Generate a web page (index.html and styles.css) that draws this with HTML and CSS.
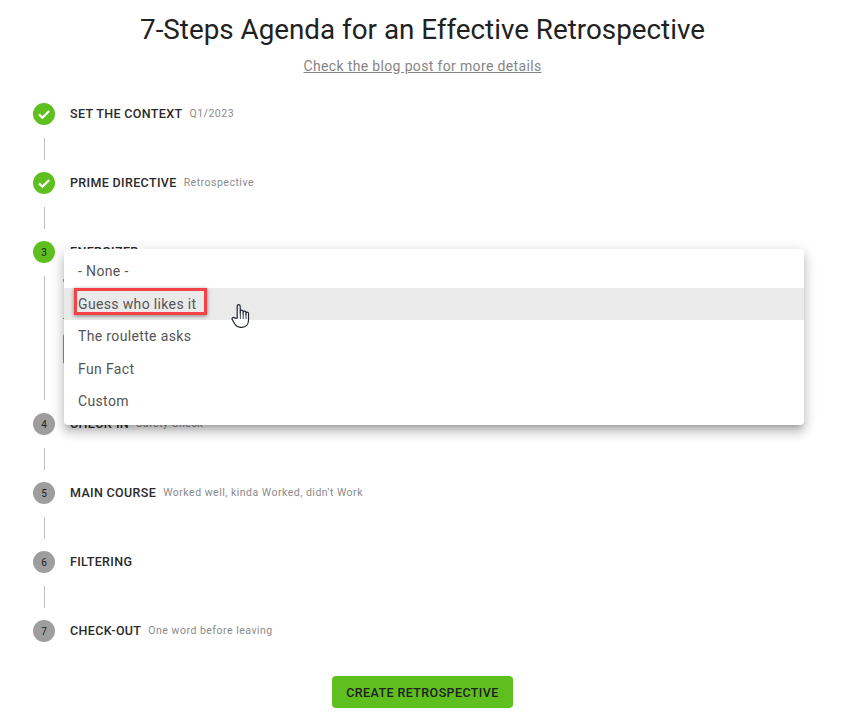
FILE: index.html
```html
<!DOCTYPE html>
<html lang="en">
<head>
  <meta charset="UTF-8">
  <meta name="viewport" content="width=device-width, initial-scale=1.0">
  <title>7-Steps Agenda</title>
  <link rel="stylesheet" href="styles.css">
</head>
<body>
  <header class="page-head">
    <h1>7-Steps Agenda for an Effective Retrospective</h1>
    <a class="blog-link" href="#">Check the blog post for more details</a>
  </header>

  <main class="stepper">
    <div class="step">
      <span class="step-icon done">
        <svg viewBox="0 0 22 22" width="22" height="22"><path d="M6 11.4l3.4 3.4L16.2 8" fill="none" stroke="#fff" stroke-width="2.2"/></svg>
      </span>
      <span class="step-title">SET THE CONTEXT</span>
      <span class="step-sub">Q1/2023</span>
    </div>
    <div class="connector"></div>

    <div class="step">
      <span class="step-icon done">
        <svg viewBox="0 0 22 22" width="22" height="22"><path d="M6 11.4l3.4 3.4L16.2 8" fill="none" stroke="#fff" stroke-width="2.2"/></svg>
      </span>
      <span class="step-title">PRIME DIRECTIVE</span>
      <span class="step-sub">Retrospective</span>
    </div>
    <div class="connector"></div>

    <div class="step">
      <span class="step-icon active">3</span>
      <span class="step-title">ENERGIZER</span>
    </div>
    <div class="connector connector-open">
      <div class="step-body">
        <div class="field-label"></div>
        <div class="field-line"></div>
        <div class="btn-next"></div>
      </div>
    </div>

    <div class="step">
      <span class="step-icon">4</span>
      <span class="step-title">CHECK-IN</span>
      <span class="step-sub">Safety Check</span>
    </div>
    <div class="connector"></div>

    <div class="step">
      <span class="step-icon">5</span>
      <span class="step-title">MAIN COURSE</span>
      <span class="step-sub">Worked well, kinda Worked, didn't Work</span>
    </div>
    <div class="connector"></div>

    <div class="step">
      <span class="step-icon">6</span>
      <span class="step-title">FILTERING</span>
    </div>
    <div class="connector"></div>

    <div class="step">
      <span class="step-icon">7</span>
      <span class="step-title">CHECK-OUT</span>
      <span class="step-sub">One word before leaving</span>
    </div>

    <ul class="menu">
      <li>- None -</li>
      <li class="hovered"><span class="marked">Guess who likes it</span></li>
      <li>The roulette asks</li>
      <li>Fun Fact</li>
      <li>Custom</li>
      <svg class="hand" viewBox="0 0 20 26" width="20" height="26">
        <path d="M6.2 15.2V3.2c0-2.2 3-2.2 3 0v7.4l.1-2.2c0-1.8 2.8-1.8 2.8 0v2.4l.1-1.5c0-1.7 2.7-1.7 2.7 0v1.9l.1-.8c0-1.6 2.5-1.6 2.5 0v6.8c0 4.300-2.600 7.100-6.600 7.100h-1.500c-2.700 0-4.200-1.100-5.600-3.300L1.300 16.800c-1-1.700 1.200-3.100 2.500-1.700z" fill="#fff" stroke="#1c2430" stroke-width="1.200" stroke-linejoin="round"/>
        <path d="M9.300 11v5M12.200 11v5M15 11v5" fill="none" stroke="#1c2430" stroke-width=".9"/>
      </svg>
    </ul>
  </main>

  <div class="actions">
    <button class="btn-create">CREATE RETROSPECTIVE</button>
  </div>
</body>
</html>
```

FILE: styles.css
```css
* {
  box-sizing: border-box;
}
html, body {
  height: 100%;
}
body {
  margin: 0;
  background-color: #fff;
  color: #212121;
  font-family: Roboto, "Liberation Sans", sans-serif;
  overflow: hidden;
}
.page-head {
  text-align: center;
  padding: 11px 0 0 2px;
}
h1 {
  margin: 0;
  font-size: 27.8px;
  line-height: 38px;
  font-weight: 400;
}
.blog-link {
  display: block;
  margin-top: 8px;
  font-size: 14px;
  line-height: 18px;
  letter-spacing: 0.35px;
  color: #858585;
}
.stepper {
  position: relative;
  padding: 28px 33px 0;
}
.step {
  display: flex;
  align-items: center;
  height: 22px;
}
.step-icon {
  flex: none;
  display: flex;
  align-items: center;
  justify-content: center;
  width: 22px;
  height: 22px;
  margin-right: 15px;
  border-radius: 50%;
  background-color: #9e9e9e;
  color: #212121;
  font-size: 10px;
}
.step-icon.done,
.step-icon.active {
  background-color: #5ebf1f;
}
.step-title {
  font-size: 12.5px;
  font-weight: 500;
  letter-spacing: 0.35px;
  margin: 0 7px 2px 0;
  color: #2a2a2a;
}
.step-sub {
  font-size: 10.5px;
  letter-spacing: 0.5px;
  margin-bottom: 2px;
  color: #8a8a8a;
}
.connector {
  width: 1px;
  height: 22px;
  margin: 13px 0 12px 11px;
  background-color: #bdbdbd;
}
.connector-open {
  position: relative;
  height: 124px;
  margin-bottom: 13px;
}
.step-body {
  width: 700px;
  margin-left: 19px;
  padding-top: 3px;
}
.field-label {
  width: 60px;
  height: 3px;
  background-color: #e8a33d;
}
.field-line {
  height: 1px;
  margin-top: 36px;
  background-color: #5ebf1f;
}
.btn-next {
  width: 90px;
  height: 32px;
  margin-top: 14px;
  border-radius: 4px;
  background-color: #5ebf1f;
}
.menu {
  position: absolute;
  top: 174px;
  left: 64px;
  width: 740px;
  margin: 0;
  padding: 6px 0 7.5px;
  list-style: none;
  background-color: #fff;
  border-radius: 4px;
  box-shadow: 0 5px 5px -3px rgba(0,0,0,.2), 0 8px 10px 1px rgba(0,0,0,.14), 0 3px 14px 2px rgba(0,0,0,.12);
}
.menu li {
  display: flex;
  align-items: center;
  height: 32.5px;
  padding-left: 14px;
  font-size: 14px;
  letter-spacing: 0.35px;
  color: #555;
}
.menu li.hovered {
  background-color: #eaeaea;
}
.marked {
  align-self: flex-start;
  margin-left: -4px;
  padding: 3px 8px 0 1px;
  line-height: 20px;
  height: 27px;
  border: 3px solid #f44346;
  box-shadow: 0 1px 4px rgba(0,0,0,.45);
}
.hand {
  position: absolute;
  top: 54px;
  left: 167px;
}
.actions {
  display: flex;
  justify-content: center;
  padding-left: 2px;
  margin-top: 34px;
}
.btn-create {
  width: 181px;
  height: 32px;
  border: none;
  border-radius: 4px;
  background-color: #5ebf1f;
  color: #212121;
  font-family: inherit;
  font-size: 12.5px;
  font-weight: 500;
  letter-spacing: 0.4px;
}
```
